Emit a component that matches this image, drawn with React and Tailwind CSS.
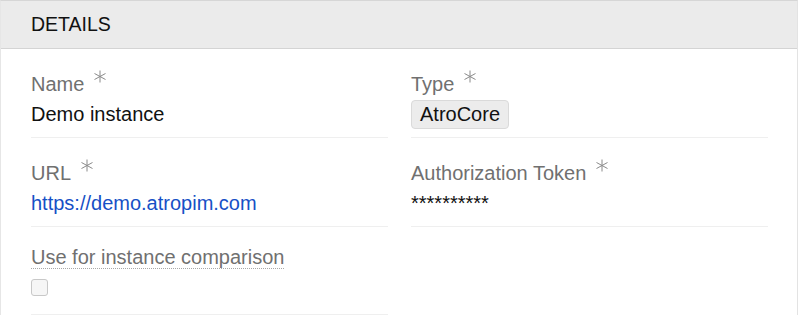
import React from "react";

function Req() {
  return (
    <svg width="14" height="13" viewBox="0 0 14 13" className="ml-[9px] mt-[1px] shrink-0" fill="none">
      <path d="M7 0.5V12.5M1.5 3.5L12.5 9.5M1.5 9.5L12.5 3.5" stroke="#8a8a8a" strokeWidth="1" />
    </svg>
  );
}

function Field({ label, required, children, last, pt = "pt-[20px]", pb = "pb-[8px]" }) {
  return (
    <div className={`${pt} ${pb} ${last ? "" : "border-b border-[#efefef]"}`}>
      <div className="flex items-start h-[30px] leading-[30px] text-[#707070]">
        <span>{label}</span>
        {required && <Req />}
      </div>
      <div className="h-[30px] flex items-center text-[#111]">{children}</div>
    </div>
  );
}

export default function App() {
  return (
    <div className="w-[800px] h-[316px] bg-white overflow-hidden" style={{ fontFamily: '"Liberation Sans", Arial, sans-serif' }}>
      <div className="w-[798px] border-t border-l border-r border-t-[#d6d6d6] border-l-[#e6e6e6] border-r-[#e3e3e3] text-[20px]">
        {/* Header */}
        <div className="h-[48px] bg-[#ebebeb] border-b border-[#d4d4d4] flex items-center px-[30px] text-[#111] text-[19.5px]">
          DETAILS
        </div>

        {/* Body */}
        <div className="pl-[30px] pr-[29px] grid grid-cols-2 gap-x-[23px]">
          <Field label="Name" required>
            Demo instance
          </Field>
          <Field label="Type" required>
            <span className="h-[29px] leading-[27px] px-[8px] rounded-[4px] bg-[#ececec] border border-[#dadada]">
              AtroCore
            </span>
          </Field>

          <Field label="URL" required>
            <a href="#" className="text-[#1650c6]">https://demo.atropim.com</a>
          </Field>
          <Field label="Authorization Token" required>
            <span className="leading-[30px]">**********</span>
          </Field>

          <div className="pt-[15px] pb-[12px] border-b border-[#efefef]">
            <div className="h-[30px] leading-[30px] text-[#707070]">
              <span className="border-b border-dotted border-[#a8a8a8]">Use for instance comparison</span>
            </div>
            <div className="h-[30px] flex items-center">
              <span className="w-[17px] h-[17px] rounded-[3px] border border-[#c8c8c8] bg-[#f6f6f6]" />
            </div>
          </div>
          <div />
        </div>
      </div>
    </div>
  );
}
